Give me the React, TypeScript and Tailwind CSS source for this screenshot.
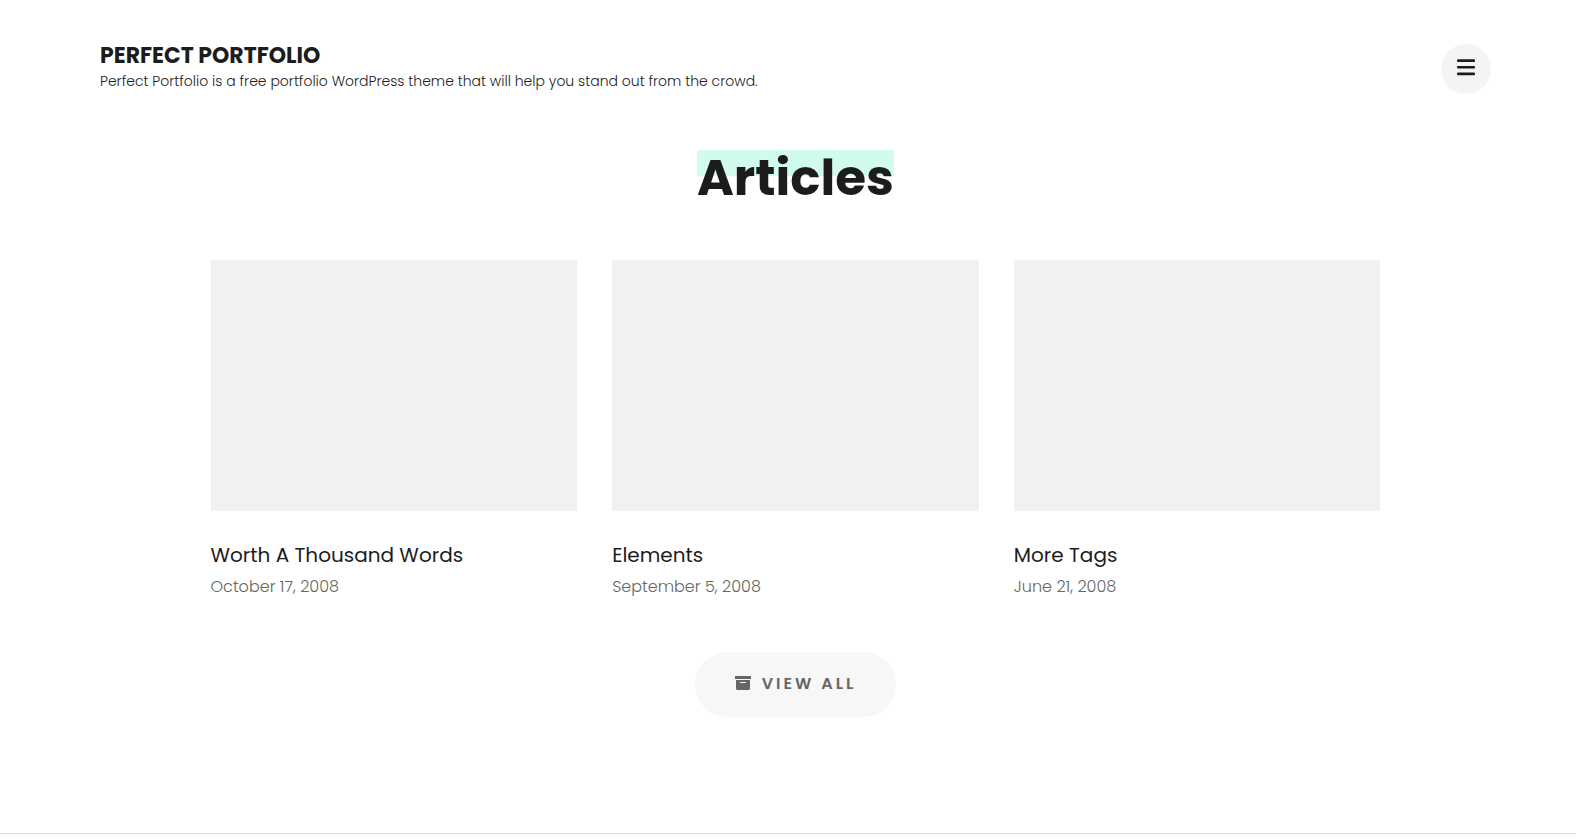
import React from "react";

const posts = [
  { title: "Worth A Thousand Words", date: "October 17, 2008" },
  { title: "Elements", date: "September 5, 2008" },
  { title: "More Tags", date: "June 21, 2008" },
];

function MenuIcon() {
  return (
    <svg width="18" height="18" viewBox="0 0 18 18" aria-hidden="true">
      <g fill="#1c1c1c">
        <rect x="0" y="1.3" width="18" height="2.7" rx="1" />
        <rect x="0" y="7.9" width="18" height="2.7" rx="1" />
        <rect x="0" y="14.5" width="18" height="2.7" rx="1" />
      </g>
    </svg>
  );
}

function ArchiveIcon() {
  return (
    <svg width="16" height="16" viewBox="0 0 16 16" fill="#666666" aria-hidden="true">
      <path d="M.5 0h15a.5.5 0 0 1 .5.5V3H0V.5A.5.5 0 0 1 .5 0z" />
      <path
        fillRule="evenodd"
        d="M1 4h14v8.5a1.5 1.5 0 0 1-1.5 1.5h-11A1.5 1.5 0 0 1 1 12.5zM5 6v.7c0 .2.1.3.3.3h5.4c.2 0 .3-.1.3-.3V6z"
      />
    </svg>
  );
}

export default function App() {
  return (
    <div className="bg-white font-['Poppins','Inter',sans-serif] text-[#1c1c1c]">
      <header className="flex items-start justify-between pt-11 pr-[85px] pl-[100px]">
        <div>
          <p className="text-[22px] leading-6 font-bold">
            <a href="#home">PERFECT PORTFOLIO</a>
          </p>
          <p className="text-sm leading-[26px] font-light">
            Perfect Portfolio is a free portfolio WordPress theme that will help you stand out from the crowd.
          </p>
        </div>
        <button
          type="button"
          aria-label="Menu"
          className="flex size-[50px] items-start justify-center rounded-full bg-[#f4f4f4] pt-[14px]"
        >
          <MenuIcon />
        </button>
      </header>

      <main className="pt-14 pr-[85px] pb-[116px] pl-[100px]">
        <h1 className="mx-auto w-fit bg-linear-to-b from-[#d1fbea] from-50% to-transparent to-50% pt-1 text-[50px] leading-[48px] font-bold">
          Articles
        </h1>

        <div className="mx-auto mt-[58px] grid max-w-[1170px] grid-cols-3 gap-[35px]">
          {posts.map((post) => (
            <article key={post.title}>
              <div className="h-[251px] bg-[#f1f1f1]" />
              <h2 className="mt-7 text-xl leading-8">
                <a href="#post">{post.title}</a>
              </h2>
              <p className="text-base leading-8 font-light text-[#666666]">
                <time>{post.date}</time>
              </p>
            </article>
          ))}
        </div>

        <div className="mt-[49px] flex justify-center">
          <a
            href="#articles"
            className="flex h-[65px] items-center gap-[11px] rounded-full bg-[#f7f7f7] px-10 pb-[2px] text-base font-semibold tracking-[3px] text-[#666666]"
          >
            <ArchiveIcon />
            VIEW ALL
          </a>
        </div>
      </main>

      <footer className="border-t border-[#d9dcdc]" />
    </div>
  );
}
